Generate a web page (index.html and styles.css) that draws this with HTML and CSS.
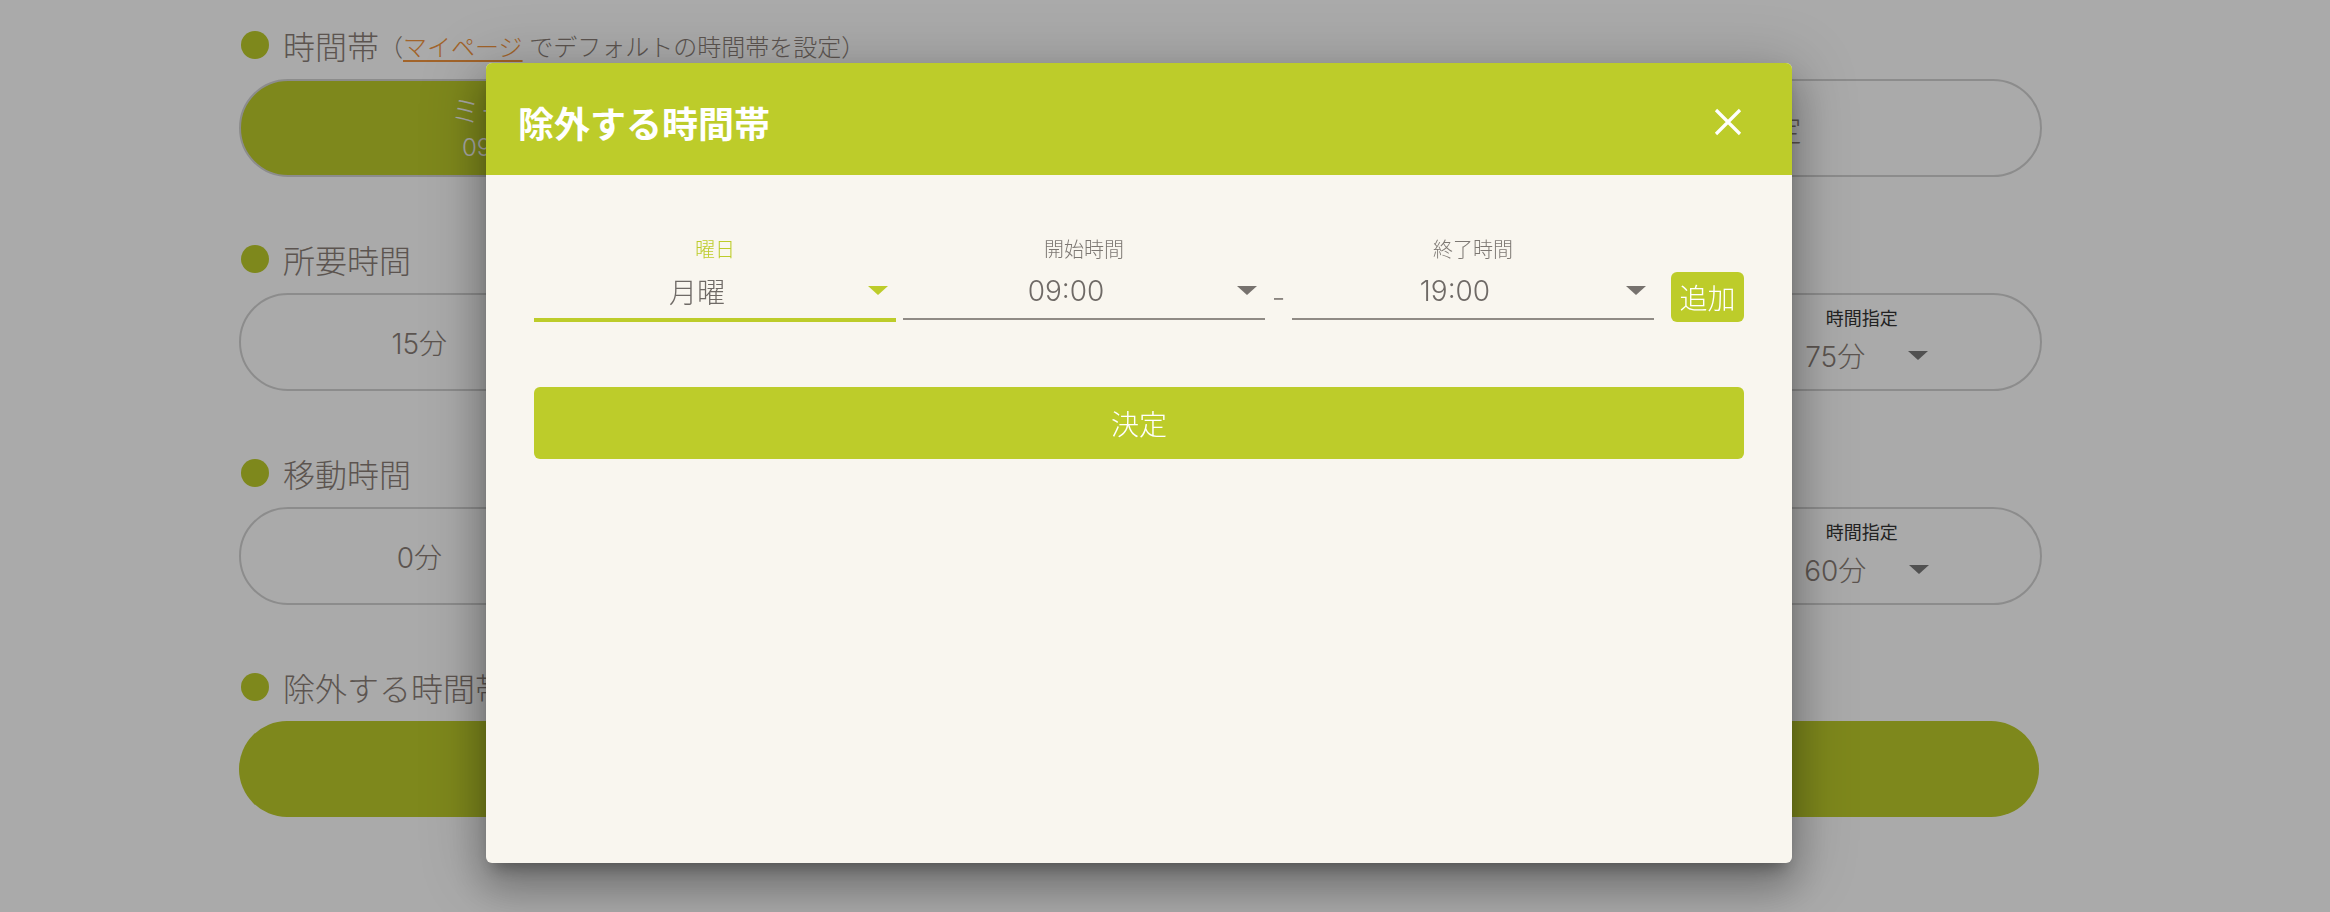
FILE: index.html
```html
<!DOCTYPE html>
<html lang="ja">
<head>
<meta charset="utf-8">
<title>除外する時間帯</title>
<link rel="stylesheet" href="styles.css">
</head>
<body>
<main class="page">
  <section class="sec">
    <h2 class="sec-title"><span class="dot"></span>時間帯<span class="note">（<a class="link">マイページ</a> でデフォルトの時間帯を設定）</span></h2>
    <div class="pills three">
      <button class="pill on"><span class="pl1">ミーティング</span><span class="pl2">09:00 ~ 19:00</span></button>
      <button class="pill"><span class="pl1">ランチ</span><span class="pl2">12:00 ~ 13:00</span></button>
      <button class="pill"><span class="big">時間指定</span></button>
    </div>
  </section>

  <section class="sec">
    <h2 class="sec-title"><span class="dot"></span>所要時間</h2>
    <div class="pills">
      <button class="pill">15分</button>
      <button class="pill">30分</button>
      <button class="pill">45分</button>
      <button class="pill">60分</button>
      <div class="pill custom">
        <span class="c-label">時間指定</span>
        <span class="c-sel"><span>75分</span><i class="caret dark"></i></span>
      </div>
    </div>
  </section>

  <section class="sec">
    <h2 class="sec-title"><span class="dot"></span>移動時間</h2>
    <div class="pills">
      <button class="pill">0分</button>
      <button class="pill">15分</button>
      <button class="pill">30分</button>
      <button class="pill">45分</button>
      <div class="pill custom">
        <span class="c-label">時間指定</span>
        <span class="c-sel"><span>60分</span><i class="caret dark"></i></span>
      </div>
    </div>
  </section>

  <section class="sec">
    <h2 class="sec-title"><span class="dot"></span>除外する時間帯</h2>
    <button class="wide">追加</button>
  </section>
</main>

<div class="overlay"></div>

<div class="modal" role="dialog">
  <header class="modal-head">
    <h1 class="modal-title">除外する時間帯</h1>
    <button class="close" aria-label="閉じる">
      <svg width="28" height="28" viewBox="0 0 28 28"><path d="M2 2 L26 26 M26 2 L2 26" stroke="#fff" stroke-width="3.2" fill="none"/></svg>
    </button>
  </header>
  <div class="modal-body">
    <div class="row">
      <div class="field focus">
        <div class="f-label">曜日</div>
        <div class="f-value"><span class="f-text">月曜</span><i class="caret green"></i></div>
      </div>
      <div class="field gap">
        <div class="f-label">開始時間</div>
        <div class="f-value"><span class="f-text">09:00</span><i class="caret"></i></div>
      </div>
      <span class="dash">-</span>
      <div class="field">
        <div class="f-label">終了時間</div>
        <div class="f-value"><span class="f-text">19:00</span><i class="caret"></i></div>
      </div>
      <button class="add">追加</button>
    </div>
    <button class="decide">決定</button>
  </div>
</div>
</body>
</html>
```
FILE: styles.css
```css
* { box-sizing: border-box; }
html, body { margin: 0; }
body {
  width: 2330px;
  height: 912px;
  overflow: hidden;
  background: #ffffff;
  font-family: Inter, "Noto Sans CJK JP", sans-serif;
  font-weight: 300;
  color: #8b7f78;
}
button { font: inherit; cursor: pointer; }

/* background page */
.page { padding: 23px 0 0 239px; width: 2042px; }
.sec { margin-bottom: 60px; }
.sec-title {
  display: flex;
  align-items: center;
  height: 44px;
  margin: 0 0 12px;
  font-size: 32px;
  font-weight: 300;
  color: #8b7f78;
  white-space: nowrap;
}
.dot {
  width: 28px; height: 28px;
  border-radius: 50%;
  background: #bdcc2a;
  margin: 0 14px 0 2px;
  flex: none;
}
.note { font-size: 24px; }
.link { color: #f39640; text-decoration: underline; text-underline-offset: 4px; }

.pills { display: grid; grid-template-columns: repeat(5, 1fr); }
.pills.three { grid-template-columns: repeat(3, 1fr); }
.pill {
  height: 98px;
  border: 2px solid #d3d3d3;
  border-radius: 49px;
  background: #ffffff;
  display: flex;
  flex-direction: column;
  align-items: center;
  justify-content: center;
  font-size: 28px;
  color: #8b7f78;
  padding: 0;
}
.pill.on { background: #bdcc2a; color: #ffffff; }
.pl1 { font-size: 30px; line-height: 40px; }
.pl2 { font-size: 24px; line-height: 34px; }
.big { font-size: 30px; }
.pill.custom { justify-content: flex-start; padding-top: 12px; }
.c-label { font-size: 18px; line-height: 24px; color: #333333; font-weight: 400; }
.c-sel {
  display: flex; align-items: center;
  margin: 6px 0 0 10px;
  height: 36px;
  font-size: 28px;
  gap: 43px;
}
.wide {
  display: block;
  width: 1800px;
  height: 96px;
  border: 0;
  border-radius: 48px;
  background: #bdcc2a;
  color: #ffffff;
  font-size: 30px;
}

.overlay {
  position: fixed;
  inset: 0;
  background: rgba(0, 0, 0, 0.333);
}

/* modal */
.modal {
  position: absolute;
  left: 486px;
  top: 63px;
  width: 1306px;
  height: 800px;
  background: #f9f6ef;
  border-radius: 6px;
  overflow: hidden;
  box-shadow: 0 11px 15px -7px rgba(0,0,0,0.3), 0 24px 38px 3px rgba(0,0,0,0.22), 0 9px 60px 10px rgba(0,0,0,0.18);
}
.modal-head {
  height: 112px;
  background: #bdcc2a;
  display: flex;
  align-items: center;
  justify-content: space-between;
  padding: 6px 50px 0 32px;
}
.modal-title { margin: 0; font-size: 36px; font-weight: 700; color: #ffffff; }
.close { width: 28px; height: 28px; border: 0; padding: 0; background: none; display: block; }
.close svg { display: block; }

.modal-body { padding: 62px 48px 0; }
.row { display: flex; align-items: flex-start; }
.field { flex: 1; border-bottom: 2px solid #908b85; }
.field.focus { border-bottom: 4px solid #bdcc2a; }
.field.gap { margin-left: 7px; }
.f-label { text-align: center; font-size: 20px; line-height: 26px; color: #7d7873; }
.focus .f-label { color: #bdcc2a; }
.f-value { height: 55px; display: flex; align-items: center; }
.f-text { flex: 1; text-align: center; font-size: 28px; color: #6f6a66; }
.caret {
  display: block;
  width: 0; height: 0;
  border-left: 10px solid transparent;
  border-right: 10px solid transparent;
  border-top: 9px solid #77726e;
  margin: 0 8px;
}
.caret.green { border-top-color: #bdcc2a; }
.caret.dark { border-top-color: #7a7a7a; margin: 0; }
.dash {
  width: 27px;
  text-align: center;
  margin-top: 45px;
  font-size: 30px;
  line-height: 30px;
  color: #8a8580;
}
.add {
  margin: 35px 0 0 17px;
  width: 73px;
  height: 50px;
  border: 0;
  border-radius: 6px;
  background: #bdcc2a;
  color: #ffffff;
  font-size: 28px;
  padding: 0;
}
.decide {
  display: block;
  width: 100%;
  height: 72px;
  margin-top: 65px;
  border: 0;
  border-radius: 6px;
  background: #bdcc2a;
  color: #ffffff;
  font-size: 28px;
}
```
